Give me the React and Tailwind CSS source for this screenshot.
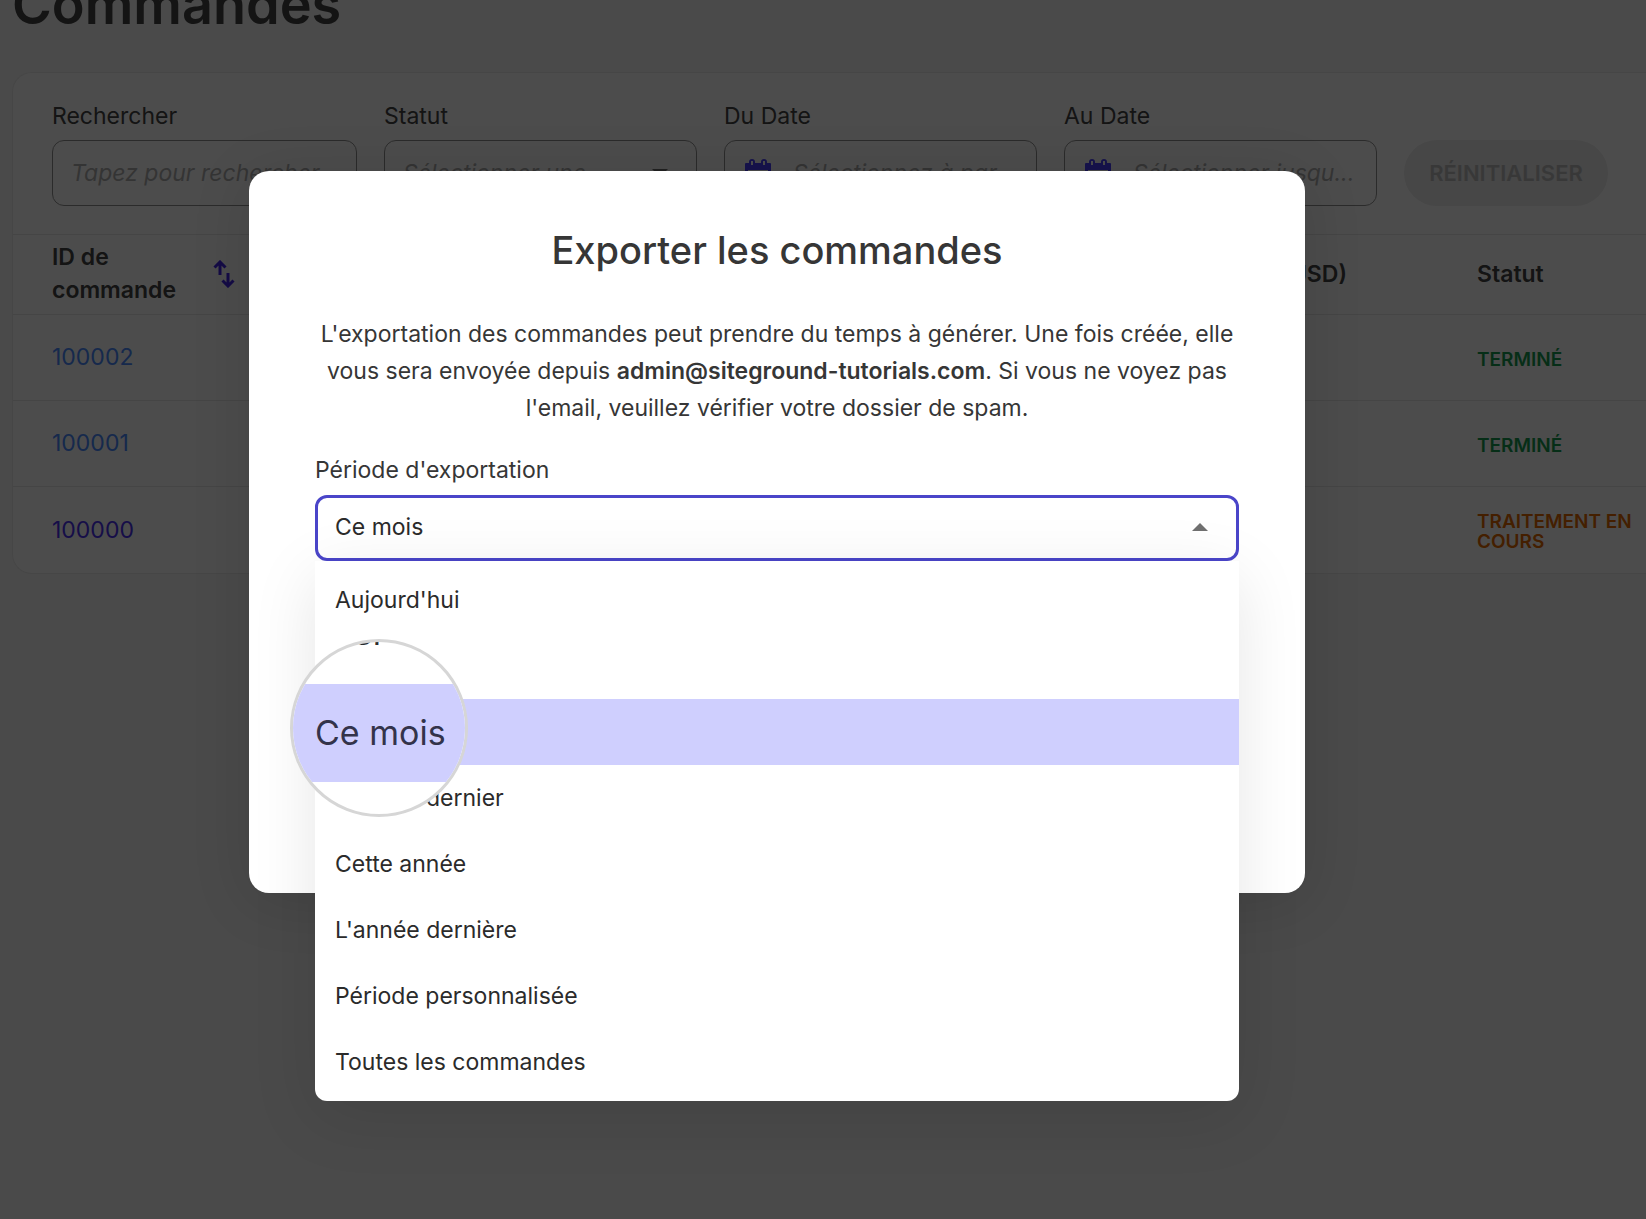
import React from 'react'
import { clsx } from 'clsx'

const orders = [
  { id: '100002', status: 'TERMINÉ', done: true, fresh: true },
  { id: '100001', status: 'TERMINÉ', done: true, fresh: true },
  { id: '100000', status: 'TRAITEMENT EN COURS', done: false, fresh: false },
]

const periods = [
  "Aujourd'hui",
  'Hier',
  'Ce mois',
  'Le mois dernier',
  'Cette année',
  "L'année dernière",
  'Période personnalisée',
  'Toutes les commandes',
]

const CalendarIcon = () => (
  <svg viewBox="0 0 26 28" className="h-7 w-[26px] shrink-0 fill-[#4a3fff]" aria-hidden="true">
    <path
      fillRule="evenodd"
      d="M1 4h3V3a3 3 0 0 1 6 0v1h6V3a3 3 0 0 1 6 0v1h3a1 1 0 0 1 1 1v20a3 3 0 0 1-3 3H3a3 3 0 0 1-3-3V5a1 1 0 0 1 1-1ZM3 11v14h20V11ZM6 2v4h2V2ZM18 2v4h2V2Z"
    />
  </svg>
)

const SortIcon = () => (
  <svg viewBox="0 0 22 28" className="h-7 w-[22px] fill-none stroke-[#4327e8]" strokeWidth="3" aria-hidden="true">
    <path d="M1.5 7.5 7 2l5.500 5.500M7 2.500V15M9.500 20.500l5.500 5.500 5.500-5.500M15 25.500V13" />
  </svg>
)

const DateField = ({ id, label, placeholder }) => (
  <div className="w-[313px] shrink-0">
    <label htmlFor={id} className="block leading-8">{label}</label>
    <div className="mt-2 flex h-[66px] items-center gap-[22px] rounded-xl border border-[#929292] pr-3 pl-5">
      <CalendarIcon />
      <input id={id} placeholder={placeholder} className="w-full min-w-0 text-ellipsis italic outline-none placeholder:text-[#b0b0b0]" />
    </div>
  </div>
)

const Filters = () => (
  <div className="flex items-end gap-[27px] px-[39px] pt-[27px] pb-7">
    <div className="w-[305px] shrink-0">
      <label htmlFor="search" className="block leading-8">Rechercher</label>
      <input
        id="search"
        placeholder="Tapez pour rechercher"
        className="mt-2 h-[66px] w-full rounded-xl border border-[#929292] px-[18px] italic placeholder:text-[#b0b0b0]"
      />
    </div>
    <div className="w-[313px] shrink-0">
      <label htmlFor="status" className="block leading-8">Statut</label>
      <div className="mt-2 flex h-[66px] items-center rounded-xl border border-[#929292] pr-7 pl-[18px]">
        <select id="status" className="w-full appearance-none text-[#b0b0b0] italic outline-none">
          <option>Sélectionner une</option>
        </select>
        <svg viewBox="0 0 16 8" className="h-2 w-4 shrink-0 fill-[#707070]" aria-hidden="true">
          <path d="M0 0h16L8 8z" />
        </svg>
      </div>
    </div>
    <DateField id="from" label="Du Date" placeholder="Sélectionnez à par..." />
    <DateField id="to" label="Au Date" placeholder="Sélectionner jusqu..." />
    <button className="h-[66px] w-[204px] shrink-0 rounded-full bg-[#ededed] text-[22px] font-semibold text-[#bdbdbd]">
      RÉINITIALISER
    </button>
  </div>
)

const OrdersTable = () => (
  <table className="w-full table-fixed border-collapse text-left">
    <thead>
      <tr className="h-20 border-y border-[#e6e6e6]">
        <th scope="col" className="w-[248px] pl-[39px] font-semibold">
          <div className="flex items-center justify-between pr-[26px] pb-0.5">
            <span className="w-32 leading-[33px]">ID de commande</span>
            <SortIcon />
          </div>
        </th>
        <th scope="col" className="pr-[130px] text-right font-semibold">Total (USD)</th>
        <th scope="col" className="w-[169px] font-semibold">Statut</th>
      </tr>
    </thead>
    <tbody>
      {orders.map((order) => (
        <tr key={order.id} className="h-[86px] border-b border-[#e6e6e6] last:border-b-0">
          <td className="pl-[39px]">
            <a href="#order" className={order.fresh ? 'text-[#4a8aff]' : 'text-[#4a30f0]'}>{order.id}</a>
          </td>
          <td />
          <td className={clsx('pt-1 text-[19px] leading-5 font-semibold', order.done ? 'text-[#149a4f]' : 'text-[#e36a00]')}>
            {order.status}
          </td>
        </tr>
      ))}
    </tbody>
  </table>
)

/* Lens drawn over the highlighted option */
const Magnifier = () => (
  <div className="absolute top-[78px] -left-[25px] flex size-[178px] flex-col overflow-hidden rounded-full border-[3px] border-[#d6d6d6] bg-white text-[34px]">
    <span className="flex h-[42px] shrink-0 items-end pl-[60px] leading-none" aria-hidden="true">
      <span className="mb-[34px]">er</span>
    </span>
    <span className="flex h-[98px] shrink-0 items-center bg-[#cfcffe] pb-0.5 pl-[22px] whitespace-nowrap text-[#33334a]">Ce mois</span>
  </div>
)

const ExportModal = () => (
  <div
    role="dialog"
    aria-labelledby="export-title"
    className="h-[722px] w-[1056px] rounded-[20px] bg-white px-[66px] pt-[49px] text-[#363636] shadow-[0_8px_60px_rgba(0,0,0,0.12)]"
  >
    <h2 id="export-title" className="text-center text-[38px] leading-[60px] font-medium">Exporter les commandes</h2>
    <p className="mt-9 text-center leading-[37px]">
      L'exportation des commandes peut prendre du temps à générer. Une fois créée, elle vous sera envoyée depuis{' '}
      <strong className="font-semibold">admin@siteground-tutorials.com</strong>. Si vous ne voyez pas l'email, veuillez
      vérifier votre dossier de spam.
    </p>
    <label htmlFor="period" className="mt-[27px] block leading-8">Période d'exportation</label>
    <div className="relative mt-[9px] text-[#2b2b2b]">
      <button
        id="period"
        aria-haspopup="listbox"
        aria-expanded="true"
        className="flex h-[66px] w-full items-center justify-between rounded-xl border-3 border-[#4a45c9] bg-white pr-7 pb-0.5 pl-[17px]"
      >
        Ce mois
        <svg viewBox="0 0 16 8" className="h-2 w-4 fill-[#707070]" aria-hidden="true">
          <path d="M8 0l8 8H0z" />
        </svg>
      </button>
      <div className="absolute inset-x-0 top-full">
        <ul role="listbox" className="rounded-b-xl bg-white py-1.5 shadow-[0_16px_66px_rgba(0,0,0,0.1)]">
          {periods.map((period) => (
            <li
              key={period}
              role="option"
              aria-selected={period === 'Ce mois'}
              className={clsx('flex h-[66px] items-center px-5', period === 'Ce mois' && 'bg-[#cfcffe]')}
            >
              {period}
            </li>
          ))}
        </ul>
        <Magnifier />
      </div>
    </div>
  </div>
)

const App = () => (
  <div className="relative min-h-screen overflow-hidden bg-[#f7f7f7] font-['Inter',sans-serif] text-[23px] text-[#444]">
    <main className="pl-3">
      <h1 className="-mt-7 text-[54px] leading-[66px] font-semibold">Commandes</h1>
      <section className="mt-[34px] overflow-hidden rounded-l-[20px] border border-r-0 border-[#ebebeb] bg-white">
        <Filters />
        <OrdersTable />
      </section>
    </main>
    <div className="absolute inset-0 flex justify-center bg-black/70 pt-[171px] pr-[92px]">
      <ExportModal />
    </div>
  </div>
)

export default App
